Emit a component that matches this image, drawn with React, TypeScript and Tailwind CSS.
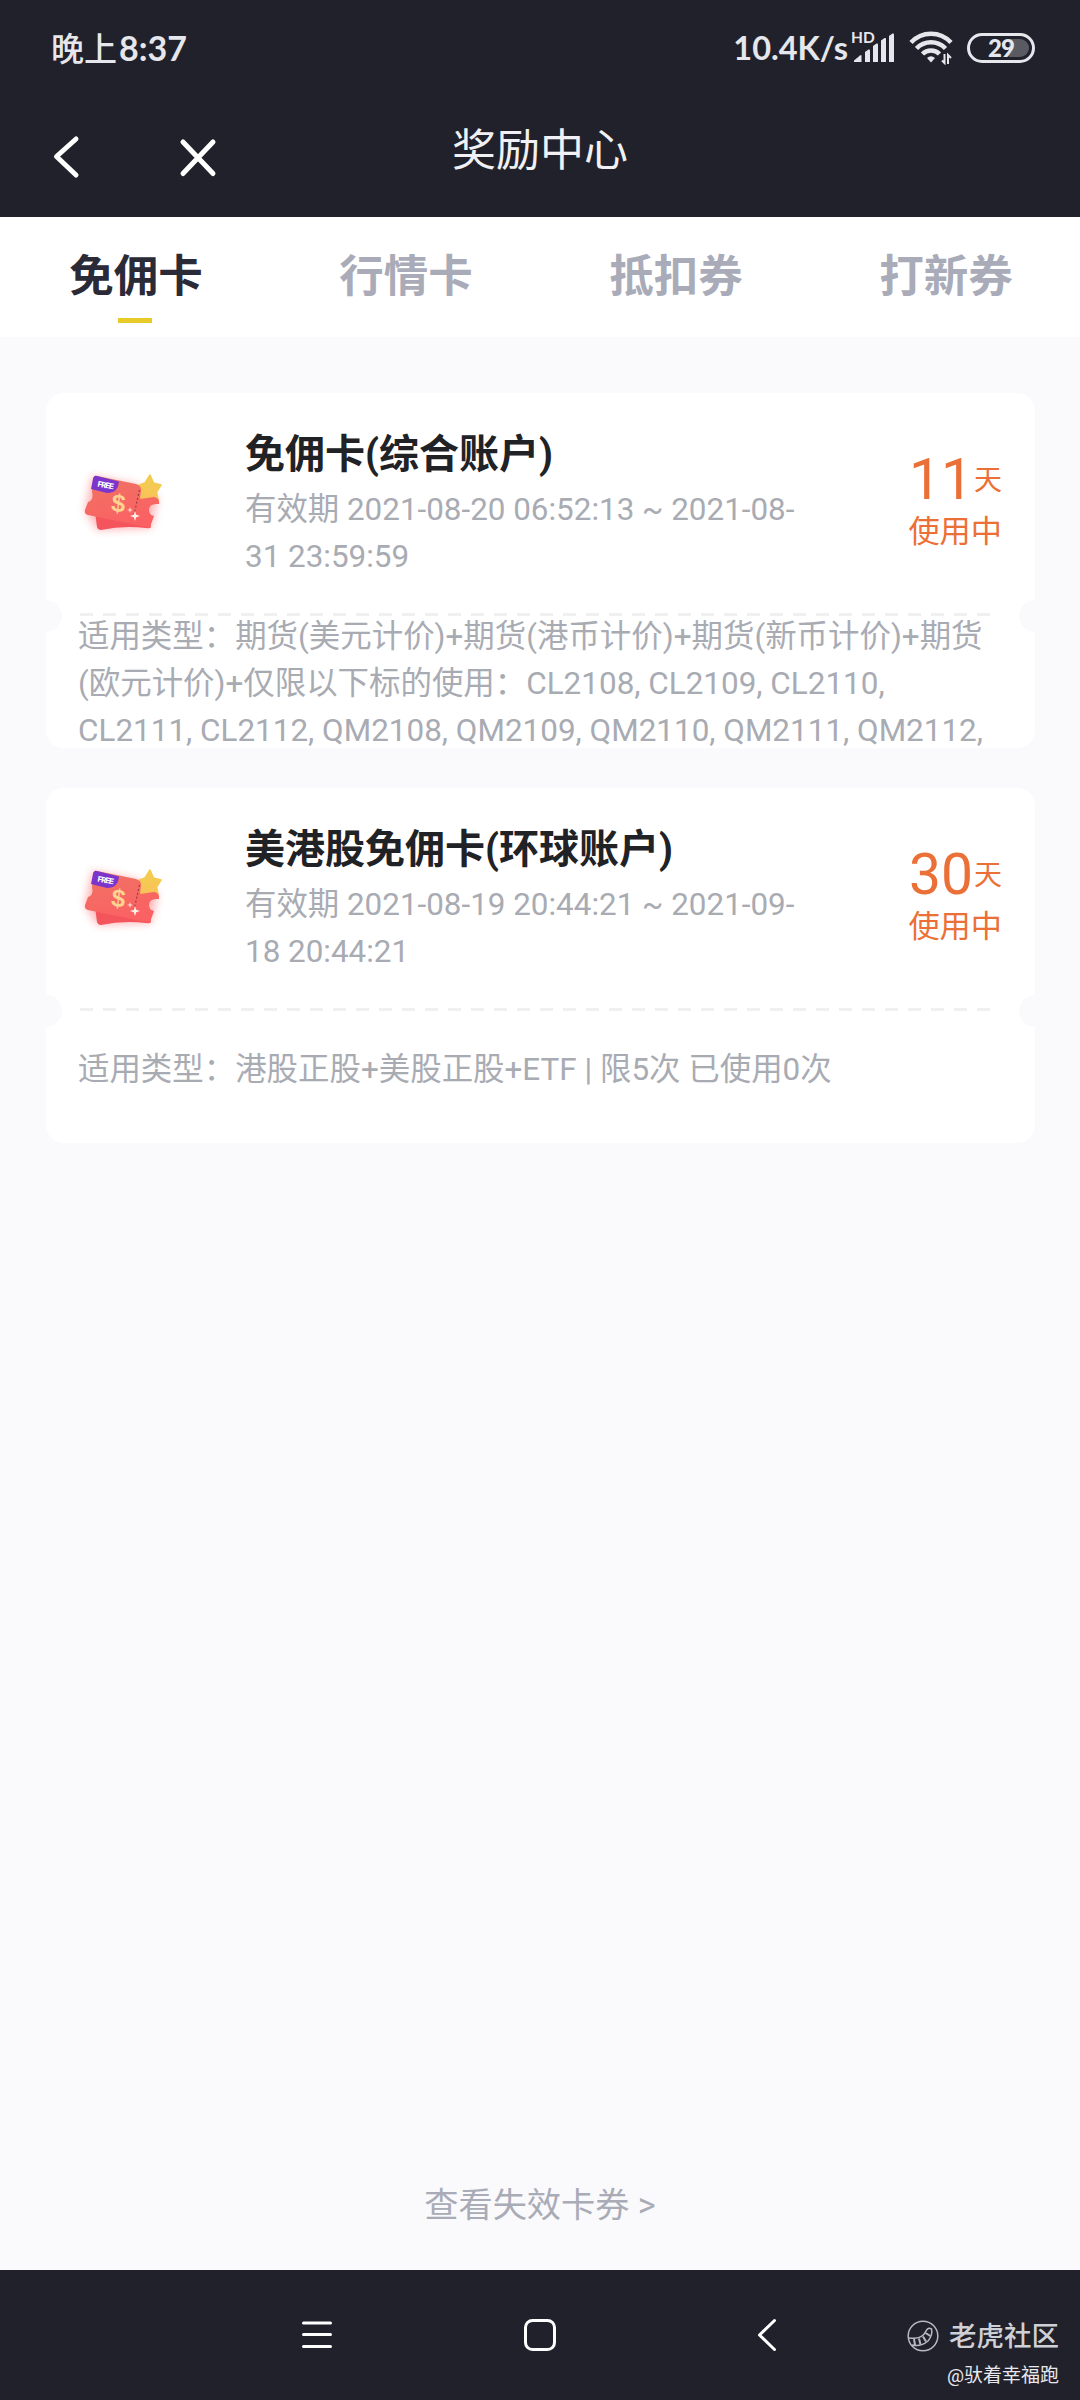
type Card = {
  title: string;
  validity: string;
  days: number;
  status: string;
  description: string;
  long?: boolean;
};

const tabs = ["免佣卡", "行情卡", "抵扣券", "打新券"];

const cards: Card[] = [
  {
    title: "免佣卡(综合账户)",
    validity: "有效期 2021-08-20 06:52:13 ~ 2021-08-31 23:59:59",
    days: 11,
    status: "使用中",
    description:
      "适用类型：期货(美元计价)+期货(港币计价)+期货(新币计价)+期货(欧元计价)+仅限以下标的使用：CL2108, CL2109, CL2110, CL2111, CL2112, QM2108, QM2109, QM2110, QM2111, QM2112,",
    long: true,
  },
  {
    title: "美港股免佣卡(环球账户)",
    validity: "有效期 2021-08-19 20:44:21 ~ 2021-09-18 20:44:21",
    days: 30,
    status: "使用中",
    description: "适用类型：港股正股+美股正股+ETF | 限5次 已使用0次",
  },
];

function SignalIcon() {
  return (
    <svg width="42" height="34" viewBox="0 0 42 34" fill="#e6e7ec" aria-hidden="true">
      <path d="M1 31 V29.500 L7 24.500 Q8.500 23.500 8.500 25 V31 Z" />
      <path d="M12 31 V21 L15.500 18.500 Q17 18 17 19.500 V31 Z" />
      <path d="M20 31 V15 L23.500 12.500 Q25 12 25 13.500 V31 Z" />
      <path d="M28 31 V9.500 L31.500 7 Q33 6.500 33 8 V31 Z" />
      <path d="M36 31 V5 L39.500 2.500 Q41 2 41 3.500 V31 Z" />
    </svg>
  );
}

function WifiIcon() {
  return (
    <svg width="44" height="34" viewBox="0 0 44 34" fill="none" stroke="#e6e7ec" strokeWidth="4.500" aria-hidden="true">
      <path d="M2 11.500 A27 27 0 0 1 42 11.500" />
      <path d="M7.500 17.500 A20 20 0 0 1 36.500 17.500" />
      <path d="M13.500 23 A12 12 0 0 1 30.500 23" />
      <path d="M18 27 Q22 23.500 26 27 L22 31.500 Z" fill="#e6e7ec" stroke="none" />
      <path d="M35.500 23 V32 L33 29.500 M39 33 V24 L42 27" strokeWidth="2" />
    </svg>
  );
}

function StatusBar() {
  return (
    <div className="flex h-[100px] items-start justify-between pt-[28px] pr-[45px] pl-[51px] text-[#e6e7ec]">
      <div className="flex h-10 items-center font-['Lato','Noto_Sans_CJK_SC',sans-serif] text-[33px] leading-10 font-medium">
        <span>晚上</span>
        <span className="ml-[2px] text-[34px] font-bold">8:37</span>
      </div>
      <div className="flex h-10 items-center">
        <span className="mr-[5px] font-['Lato',sans-serif] text-[32.500px] leading-10 font-bold">10.4K/s</span>
        <div className="relative mr-[14px]">
          <SignalIcon />
          <span className="absolute top-[-2px] left-[-2px] font-['Lato',sans-serif] text-[15.500px] leading-4 font-bold">HD</span>
        </div>
        <WifiIcon />
        <div className="relative ml-[14px] flex h-[30px] w-[68px] items-center justify-center rounded-full border-[3px] border-[#e6e7ec]">
          <span className="absolute top-[3px] right-[3px] h-[18px] w-[20px] rounded-r-full bg-[#5a5b62]" />
          <span className="relative font-['Lato',sans-serif] text-[24px] leading-none font-black tracking-[-1px]">29</span>
        </div>
      </div>
    </div>
  );
}

function TitleBar() {
  return (
    <div className="grid h-[117px] grid-cols-3 items-start">
      <div className="flex pt-[33px] pl-[49px]">
        <svg width="34" height="46" viewBox="0 0 34 46" fill="none" stroke="#fff" strokeWidth="5" strokeLinecap="round" strokeLinejoin="round">
          <path d="M27 6 L7.500 23.500 L27 42" />
        </svg>
        <svg className="ml-[92px]" width="44" height="46" viewBox="0 0 44 46" fill="none" stroke="#fff" strokeWidth="5" strokeLinecap="round">
          <path d="M8 9 L38 40.500 M38 9 L8 40.500" />
        </svg>
      </div>
      <h1 className="pt-[21px] text-center text-[44px] leading-[60px] font-normal text-[#f1f1f5]">奖励中心</h1>
    </div>
  );
}

/** Pair of red coupons with a star, used as the card thumbnail */
function CouponIcon() {
  return (
    <svg width="100" height="90" viewBox="0 0 100 90" aria-hidden="true">
      <defs>
        <linearGradient id="coupon" x1="0" y1="0" x2="0.4" y2="1">
          <stop offset="0" stopColor="#ee7464" />
          <stop offset="1" stopColor="#fb6163" />
        </linearGradient>
        <linearGradient id="star" x1="0" y1="0" x2="0" y2="1">
          <stop offset="0" stopColor="#f0d04e" />
          <stop offset="1" stopColor="#fbc05a" />
        </linearGradient>
        <filter id="glow" x="-30%" y="-30%" width="160%" height="160%">
          <feGaussianBlur stdDeviation="4" />
        </filter>
      </defs>
      <path d="M19 18 L62 26 L85 40 L78 70 L24 72 L12 52 Z" fill="#ff7b7f" opacity="0.55" filter="url(#glow)" />
      <path d="M22 54 L74 38 L78 69 Q77 71 73 70 Q50 67 28 72 Q25 72 24 69 Z" fill="#f4545c" />
      <path d="M77 17 L80.500 25 L88 27 L83.500 34 L85 42 L77 40 L68 43 L68 34 L64 28 L72 25 Z" fill="url(#star)" stroke="#f4c94d" strokeWidth="1.500" strokeLinejoin="round" />
      <path d="M24 18 L63 26 Q69 28 68 33 L67 41 L81 39 Q87 40 86 46 Q76 45 76 52 Q76 57 81 58 L77 69 Q76 71 73 69 L15 57 Q11 56 12 52 L15 44 Q21 42 19 34 L20 21 Q21 17 24 18 Z" fill="url(#coupon)" />
      <path d="M24 18 L46 23.500 Q45 35 34 35 L18 31 L20 21 Q21 17 24 18 Z" fill="#7c35cc" />
      <text x="24" y="28.500" transform="rotate(10 24 28)" className="font-['Liberation_Mono',monospace] text-[8.500px] font-bold" fill="#fff" textLength="17">
        FREE
      </text>
      <text x="38.500" y="54" transform="rotate(7 46 46)" className="font-['Liberation_Sans',sans-serif] text-[25px] font-bold" fill="#ffd391">
        $
      </text>
      <path d="M66.500 32 L61 57" stroke="#9f3c48" strokeWidth="1.200" strokeDasharray="2 2" />
      <path d="M62 53 L63.200 56.800 L67 58 L63.200 59.200 L62 63 L60.800 59.200 L57 58 L60.800 56.800 Z" fill="#fff0e8" />
      <path d="M57 49 L57.800 51.200 L60 52 L57.800 52.800 L57 55 L56.200 52.800 L54 52 L56.200 51.200 Z" fill="#ffd4c9" />
    </svg>
  );
}

function CouponCard({ card }: { card: Card }) {
  return (
    <article className="relative h-[355px] overflow-hidden rounded-[18px] bg-white">
      <div className="flex h-[220px]">
        <div className="w-[199px] pt-[65px] pl-[27px]">
          <CouponIcon />
        </div>
        <div className="w-[560px] pt-[36px]">
          <h2 className="text-[40px] leading-[52px] font-bold text-[#212226]">{card.title}</h2>
          <p className="mt-[5px] text-[31.400px] leading-[47px] text-[#a9abb3]">{card.validity}</p>
        </div>
        <div className="flex flex-1 flex-col items-end pt-[56px] pr-[33px] text-[#eb7037]">
          <div className="flex items-baseline">
            <span className="text-[57px] leading-[62px]">{card.days}</span>
            <span className="relative -top-[9px] ml-px text-[28px] leading-none">天</span>
          </div>
          <span className="text-[31.200px] leading-[42px]">{card.status}</span>
        </div>
      </div>
      <svg className="ml-[34px] block" width="912" height="3" aria-hidden="true">
        <path d="M0 1.500 H911" stroke="#f0f0f2" strokeWidth="3" strokeDasharray="13 10" />
      </svg>
      <p className={`pr-[30px] pl-[32px] text-[31.450px] leading-[47px] text-[#a9abb3] ${card.long ? "-mt-[3px]" : "pt-[35px]"}`}>
        {card.description}
      </p>
      <span className="absolute top-[207px] -left-4 size-8 rounded-full bg-[#fafafc]" />
      <span className="absolute top-[207px] -right-4 size-8 rounded-full bg-[#fafafc]" />
    </article>
  );
}

function CommunityLogo() {
  return (
    <svg width="32" height="32" viewBox="0 0 32 32" fill="none" stroke="#b9bac1" strokeWidth="1.500" aria-hidden="true">
      <circle cx="16" cy="16" r="14.800" />
      <path d="M2 18 Q15 20 19 11 Q21 7 24.500 9 Q26 15 21 21 Q14 27 5 25" />
      <path d="M7 19 L8 25 M12 18.500 L13.500 24.500 M16 16.500 L19 21.500 M18.500 13 L23.500 16" strokeWidth="2" />
    </svg>
  );
}

function NavigationBar() {
  return (
    <nav className="relative flex h-[130px] bg-[#21212b] pt-[45px] pl-[297px]">
      <svg width="40" height="40" viewBox="0 0 40 40" stroke="#fff" strokeWidth="3" strokeLinecap="round">
        <path d="M6.500 8 H33.500 M6.500 19.500 H33.500 M6.500 31.500 H33.500" />
      </svg>
      <svg className="ml-[183px]" width="40" height="40" viewBox="0 0 40 40" fill="none" stroke="#fff" strokeWidth="3">
        <rect x="5.500" y="5.500" width="29" height="29" rx="7" />
      </svg>
      <svg className="ml-[190px]" width="40" height="40" viewBox="0 0 40 40" fill="none" stroke="#fff" strokeWidth="3" strokeLinecap="round" strokeLinejoin="round">
        <path d="M24.500 5.500 L9.500 20 L24.500 34.500" />
      </svg>
      <div className="absolute top-[46px] right-[21px] flex flex-col items-end">
        <div className="flex h-10 items-center gap-[10px]">
          <CommunityLogo />
          <span className="relative top-px text-[27.500px] leading-10 font-medium text-[#cfd0d6]">老虎社区</span>
        </div>
        <span className="mt-[8px] text-[19px] leading-6 text-[#e8e8ec]">@驮着幸福跑</span>
      </div>
    </nav>
  );
}

export default function App() {
  return (
    <div className="flex h-[2400px] w-[1080px] flex-col overflow-hidden bg-[#fafafc] font-['Roboto','Noto_Sans_CJK_SC',sans-serif]">
      <header className="bg-[#21212b]">
        <StatusBar />
        <TitleBar />
      </header>
      <div className="grid h-[120px] grid-cols-4 bg-white">
        {tabs.map((tab, i) => (
          <button key={tab} className="flex flex-col items-center pt-[30px]">
            <span className={`pl-[2px] text-[44.500px] leading-[60px] font-bold ${i === 0 ? "text-[#2b2b38]" : "text-[#a9acb8]"}`}>{tab}</span>
            {i === 0 && <span className="mt-[11px] h-[5px] w-[34px] bg-[#e8ca29]" />}
          </button>
        ))}
      </div>
      <main className="flex flex-1 flex-col gap-10 pt-[56px] pr-[45px] pl-[46px]">
        {cards.map((card) => (
          <CouponCard key={card.title} card={card} />
        ))}
      </main>
      <footer className="flex h-[90px] justify-center text-[34.200px] leading-[50px] text-[#a9abb6]">查看失效卡券 &gt;</footer>
      <NavigationBar />
    </div>
  );
}
